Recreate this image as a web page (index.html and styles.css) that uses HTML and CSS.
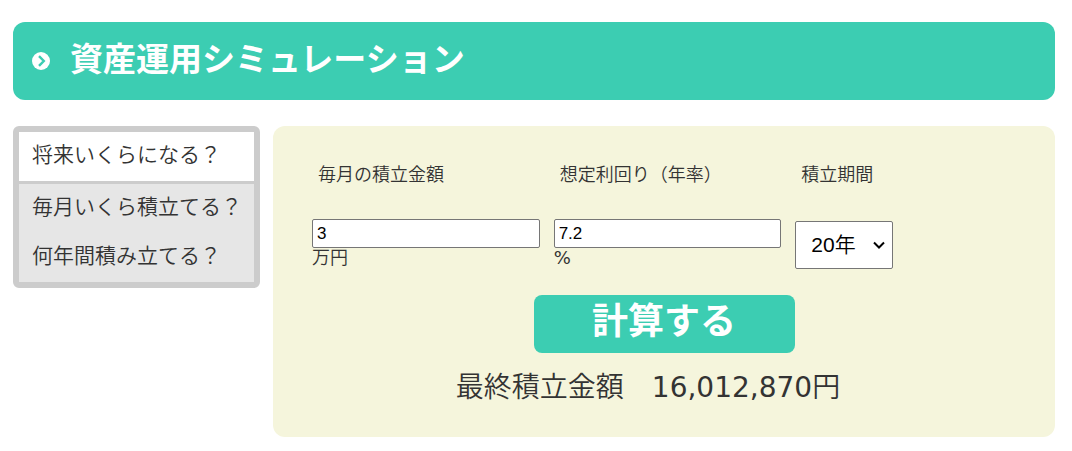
FILE: index.html
```html
<!DOCTYPE html>
<html lang="ja">
<head>
    <meta charset="UTF-8">
    <meta name="viewport" content="width=device-width, initial-scale=1.0">
    <title>資産運用シミュレーション</title>
    <link rel="stylesheet" href="styles.css">
</head>
<body>
    <header class="title-bar">
        <svg class="title-icon" viewBox="0 0 18 18" aria-hidden="true">
            <circle cx="9" cy="9" r="9" fill="#fff"/>
            <path d="M7 4.2l4.8 4.8-4.8 4.8" fill="none" stroke="#3ccdb2" stroke-width="2.4"/>
        </svg>
        <h1>資産運用シミュレーション</h1>
    </header>

    <main class="container">
        <nav class="menu">
            <ul>
                <li class="active"><a href="#future">将来いくらになる？</a></li>
                <li><a href="#monthly">毎月いくら積立てる？</a></li>
                <li><a href="#years">何年間積み立てる？</a></li>
            </ul>
        </nav>

        <section class="panel">
            <form id="simulation-form">
                <div class="fields">
                    <div class="field">
                        <label for="amount">毎月の積立金額</label>
                        <input type="text" id="amount" name="amount" value="3">
                        <span class="unit">万円</span>
                    </div>
                    <div class="field">
                        <label for="rate">想定利回り（年率）</label>
                        <input type="text" id="rate" name="rate" value="7.2">
                        <span class="unit percent">%</span>
                    </div>
                    <div class="field">
                        <label for="period">積立期間</label>
                        <div class="select-box">
                            <select id="period" name="period">
                                <option value="10">10年</option>
                                <option value="20" selected>20年</option>
                                <option value="30">30年</option>
                            </select>
                            <svg class="select-arrow" viewBox="0 0 12 8" aria-hidden="true">
                                <path d="M1 1.5l5 5 5-5" fill="none" stroke="#000" stroke-width="2"/>
                            </svg>
                        </div>
                    </div>
                </div>
                <button type="submit">計算する</button>
            </form>
            <p class="result">最終積立金額　<span id="total">16,012,870</span>円</p>
        </section>
    </main>

    <script>
        document.getElementById('simulation-form').addEventListener('submit', function (e) {
            e.preventDefault();

            const amount = Number(document.getElementById('amount').value) * 10000;
            const rate = Number(document.getElementById('rate').value) / 100 / 12;
            const months = Number(document.getElementById('period').value) * 12;
            const total = rate === 0 ? amount * months : amount * (Math.pow(1 + rate, months) - 1) / rate;

            document.getElementById('total').innerText = Math.round(total).toLocaleString();
        });
    </script>
</body>
</html>
```

FILE: styles.css
```css
* {
    box-sizing: border-box;
}

body {
    margin: 0;
    padding: 22px 17px 14px 13px;
    background-color: #fff;
    color: #333;
    font-family: "DejaVu Sans", "Noto Sans CJK JP", sans-serif;
    font-weight: 350;
    font-size: 18px;
    line-height: 24px;
}

.title-bar {
    display: flex;
    align-items: center;
    gap: 20px;
    padding: 15px 19px;
    margin-bottom: 26px;
    border-radius: 12px;
    background-color: #3ccdb2;
    color: #fff;
}

.title-bar h1 {
    margin: 0;
    padding-bottom: 2px;
    font-size: 33px;
    line-height: 46px;
}

.title-icon {
    width: 18px;
    height: 18px;
}

.container {
    display: flex;
    align-items: flex-start;
    gap: 13px;
}

.menu {
    flex: none;
    border: 6px solid #ccc;
    border-radius: 6px;
    background-color: #e6e6e6;
}

.menu ul {
    list-style-type: none;
    margin: 0;
    padding: 0;
}

.menu .active {
    border-bottom: 3px solid #ccc;
    background-color: #fff;
}

.menu a {
    display: block;
    padding: 8px 12px 10px 13px;
    color: #333;
    font-size: 21px;
    line-height: 31px;
    text-decoration: none;
}

.panel {
    flex: 1;
    padding: 37px 0 29px;
    border-radius: 12px;
    background-color: #f5f5dc;
}

.fields {
    display: grid;
    grid-template-columns: repeat(3, 1fr);
    gap: 14px;
    padding: 0 32px 0 39px;
}

.field {
    display: flex;
    flex-direction: column;
    align-items: flex-start;
}

.field label {
    padding-left: 6px;
    margin-bottom: 32px;
}

.field input {
    width: 100%;
    height: 29px;
    padding: 1px 4px;
    border: 1px solid #767676;
    border-radius: 2px;
    font-family: "Liberation Sans", sans-serif;
    font-size: 17px;
}

.field .unit {
    line-height: 20px;
}

.field .percent {
    font-weight: 400;
}

.select-box {
    display: grid;
    align-items: center;
    margin-top: 2px;
}

.select-box select {
    grid-area: 1 / 1;
    appearance: none;
    width: 98px;
    height: 48px;
    padding: 0 15px 2px;
    border: 1px solid #767676;
    border-radius: 2px;
    background-color: #fff;
    color: #000;
    font-family: "Liberation Sans", "Noto Sans CJK JP", sans-serif;
    font-size: 21px;
    font-weight: 350;
}

.select-arrow {
    grid-area: 1 / 1;
    justify-self: end;
    width: 12px;
    height: 8px;
    margin-right: 8px;
    pointer-events: none;
}

button {
    display: block;
    width: 261px;
    margin: 26px auto 0;
    padding: 3px 0 7px;
    border: none;
    border-radius: 8px;
    background-color: #3ccdb2;
    color: #fff;
    font-family: inherit;
    font-size: 36px;
    font-weight: bold;
    line-height: 48px;
    cursor: pointer;
}

.result {
    margin: 15px 0 0;
    padding-right: 32px;
    font-size: 28px;
    line-height: 40px;
    text-align: center;
}

.result span {
    font-weight: 400;
}
```
